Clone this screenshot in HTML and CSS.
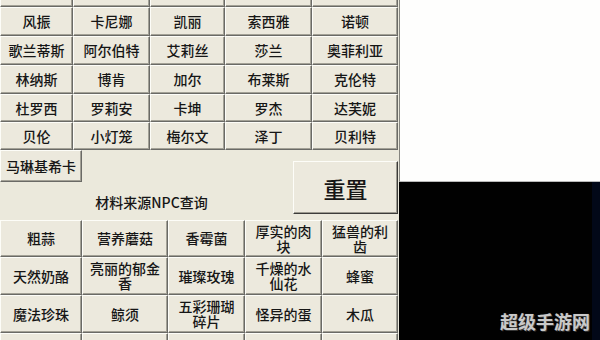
FILE: index.html
```html
<!DOCTYPE html>
<html lang="zh-CN">
<head>
<meta charset="utf-8">
<title>材料来源NPC查询</title>
<link rel="stylesheet" href="styles.css">
</head>
<body>
<div class="screen">
  <div class="dialog">
    <div class="npc-grid">
      <div class="btn cut"></div><div class="btn cut"></div><div class="btn cut"></div><div class="btn cut"></div><div class="btn cut"></div>
      <div class="btn">风振</div><div class="btn">卡尼娜</div><div class="btn">凯丽</div><div class="btn">索西雅</div><div class="btn">诺顿</div>
      <div class="btn">歌兰蒂斯</div><div class="btn">阿尔伯特</div><div class="btn">艾莉丝</div><div class="btn">莎兰</div><div class="btn">奥菲利亚</div>
      <div class="btn">林纳斯</div><div class="btn">博肯</div><div class="btn">加尔</div><div class="btn">布莱斯</div><div class="btn">克伦特</div>
      <div class="btn">杜罗西</div><div class="btn">罗莉安</div><div class="btn">卡坤</div><div class="btn">罗杰</div><div class="btn">达芙妮</div>
      <div class="btn">贝伦</div><div class="btn">小灯笼</div><div class="btn">梅尔文</div><div class="btn">泽丁</div><div class="btn">贝利特</div>
    </div>
    <div class="middle">
      <div class="middle-left">
        <div class="btn single">马琳基希卡</div>
        <div class="caption">材料来源NPC查询</div>
      </div>
      <div class="btn reset">重置</div>
    </div>
    <div class="item-grid">
      <div class="btn cell">粗蒜</div><div class="btn cell">营养蘑菇</div><div class="btn cell">香霉菌</div><div class="btn cell">厚实的肉块</div><div class="btn cell">猛兽的利齿</div>
      <div class="btn cell">天然奶酪</div><div class="btn cell">亮丽的郁金香</div><div class="btn cell">璀璨玫瑰</div><div class="btn cell">千燥的水仙花</div><div class="btn cell">蜂蜜</div>
      <div class="btn cell">魔法珍珠</div><div class="btn cell">鲸须</div><div class="btn cell">五彩珊瑚碎片</div><div class="btn cell">怪异的蛋</div><div class="btn cell">木瓜</div>
      <div class="btn cell"></div><div class="btn cell"></div><div class="btn cell"></div><div class="btn cell"></div><div class="btn cell"></div>
    </div>
  </div>
  <div class="side">
    <div class="side-white"></div>
    <div class="side-black">
      <span class="watermark">超级手游网</span>
    </div>
  </div>
</div>
</body>
</html>
```

FILE: styles.css
```css
html, body {
  margin: 0;
  padding: 0;
  width: 600px;
  height: 340px;
  overflow: hidden;
  background: #000;
}

.screen {
  display: flex;
  width: 600px;
  height: 340px;
  font-family: "Noto Sans CJK SC", "Noto Sans", sans-serif;
  color: #161616;
}

.dialog {
  width: 399px;
  height: 340px;
  background: #ebe9dc;
  display: flex;
  flex-direction: column;
  overflow: hidden;
  flex-shrink: 0;
}

.btn {
  box-sizing: border-box;
  background: #ece9dd;
  border: 1px solid;
  border-color: #fdfdf8 #6a6a66 #6a6a66 #fdfdf8;
  box-shadow: inset -1px -1px 0 #a3a196;
  display: flex;
  align-items: center;
  justify-content: center;
  text-align: center;
  font-size: 14px;
  font-weight: 500;
  line-height: 15px;
  overflow: hidden;
}

.npc-grid {
  display: grid;
  width: 398px;
  grid-template-columns: 73px 77px 75px 87px 86px;
  grid-template-rows: 7px 29px 29px 29px 28px 28px;
}

.btn.cut {
  border-top: none;
}

.middle {
  display: flex;
  width: 398px;
  height: 70px;
  flex-shrink: 0;
}

.middle-left {
  width: 293px;
  display: flex;
  flex-direction: column;
}

.btn.single {
  width: 82px;
  height: 32px;
}

.caption {
  margin-top: 12px;
  padding-left: 10px;
  text-align: center;
  font-size: 14px;
  font-weight: 500;
  line-height: 16px;
}

.btn.reset {
  margin-top: 11px;
  width: 105px;
  height: 53px;
  font-size: 22px;
  line-height: 24px;
  border-color: #fdfdf8 #3c3c3a #3c3c3a #fdfdf8;
  box-shadow: inset -1px -1px 0 #9c9a8f;
}

.item-grid {
  display: grid;
  width: 398px;
  grid-template-columns: 82px 86px 77px 77px 76px;
  grid-template-rows: 37px 38px 38px 38px;
}

.btn.cell {
  padding: 0 6px;
}

.side {
  width: 201px;
  height: 340px;
  display: flex;
  flex-direction: column;
}

.side-white {
  height: 181px;
  background: #fefefd;
  border-left: 1px solid #85857f;
  border-bottom: 1px solid #b9b9b9;
  flex-shrink: 0;
}

.side-black {
  flex: 1;
  background: #010101;
  border-right: 8px solid #020818;
  position: relative;
}

.watermark {
  position: absolute;
  right: 2px;
  bottom: 9px;
  font-size: 18px;
  font-weight: 700;
  line-height: 20px;
  color: #c9c9c9;
  text-shadow: 0 0 1px #555, 1px 1px 0 #333;
}
```
